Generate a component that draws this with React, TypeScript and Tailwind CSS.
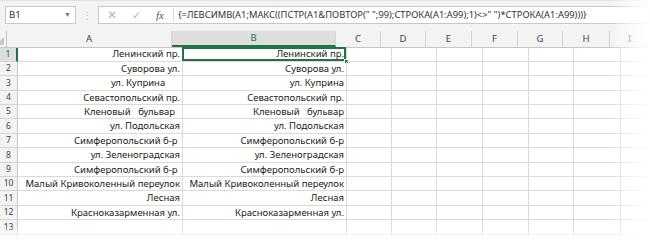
import React from 'react';

const colW = ['w-[165px]', 'w-[164px]', 'w-[45px]', 'w-[45px]', 'w-[46px]', 'w-[46px]', 'w-[45px]', 'w-[47px]', 'w-[40px]'];
const colNames = ['A', 'B', 'C', 'D', 'E', 'F', 'G', 'H', 'I'];

const streets: string[] = [
  'Ленинский пр.',
  'Суворова ул.',
  'ул. Куприна      ',
  'Севастопольский пр.',
  'Кленовый   бульвар  ',
  'ул. Подольская',
  'Симферопольский б-р ',
  'ул. Зеленоградская',
  'Симферопольский б-р ',
  'Малый Кривоколенный переулок',
  'Лесная',
  'Красноказарменная ул.',
  '',
  '',
];

const formula = '{=ЛЕВСИМВ(A1;МАКС((ПСТР(A1&ПОВТОР(" ";99);СТРОКА(A1:A99);1)<>" ")*СТРОКА(A1:A99)))}';

export default function App() {
  return (
    <div className="relative w-[650px] h-[240px] overflow-hidden bg-white font-['Noto_Sans',sans-serif] text-[#1a1a1a]">
      {/* Formula bar */}
      <div className="h-[31px] bg-[#f3f3f3] border-t border-[#e2e2e2] flex items-center pl-[5px] pb-[2px]">
        <div className="w-[71px] h-[18px] bg-white border border-[#c8c8c8] flex items-center justify-between pl-[3px] pr-[4px]">
          <span className="text-[9.5px] text-[#333]">B1</span>
          <span className="text-[7px] text-[#777]">▼</span>
        </div>
        <div className="w-[22px] flex justify-center text-[#bbb] text-[10px]">⋮</div>
        <div className="flex-1 h-[18px] bg-white border border-[#c8c8c8] flex items-center">
          <div className="w-[26px] text-center text-[#b4b4b4] text-[12px]">✕</div>
          <div className="w-[22px] text-center text-[#b4b4b4] text-[11px]">✓</div>
          <div className="w-[26px] text-center text-[#555] text-[11px] italic font-['Liberation_Serif',serif]">fx</div>
          <div className="w-px h-[14px] bg-[#dcdcdc] mr-[4px]" />
          <span className="whitespace-pre text-[9.35px] text-[#333]">{formula}</span>
        </div>
      </div>

      {/* Column headers */}
      <div className="flex h-[16.5px] bg-[#f3f3f3] border-b border-[#c6c6c6]">
        <div className="w-[18px] border-r border-[#c6c6c6] relative">
          <div className="absolute right-[2px] bottom-[2px] w-0 h-0 border-l-[8px] border-l-transparent border-b-[8px] border-b-[#c8c8c8]" />
        </div>
        {colNames.map((c, i) => (
          <div
            key={c}
            className={`${colW[i]} shrink-0 border-r border-[#d4d4d4] flex items-center justify-center text-[9.5px] ${
              i === 1 ? 'bg-[#dedede] text-[#217346] border-b-2 border-b-[#217346]' : 'text-[#444]'
            }`}
          >
            {c}
          </div>
        ))}
      </div>

      {/* Rows */}
      {streets.map((s, r) => (
        <div key={r} className="flex h-[14.4px]">
          <div
            className={`w-[18px] shrink-0 flex items-center justify-center text-[8.5px] border-b border-[#d4d4d4] ${
              r === 0 ? 'bg-[#dedede] text-[#217346] border-r-2 border-r-[#217346]' : 'bg-[#f3f3f3] text-[#444] border-r border-r-[#c6c6c6]'
            }`}
          >
            {r < 13 ? r + 1 : ''}
          </div>
          {colNames.map((c, i) => (
            <div
              key={c}
              className={`${colW[i]} shrink-0 relative border-r border-b border-[#dadada] flex items-center justify-end pr-[2px] text-[9.5px] leading-none whitespace-pre`}
            >
              {i === 0 && s}
              {i === 1 && s.trim()}
              {i === 1 && r === 0 && (
                <>
                  <div className="absolute -left-[1px] -top-[1px] right-0 bottom-0 border-2 border-[#217346]" />
                  <div className="absolute -right-[3px] -bottom-[3px] w-[5px] h-[5px] bg-[#217346] border border-white" />
                </>
              )}
            </div>
          ))}
        </div>
      ))}

      {/* edge fades of the screenshot */}
      <div className="absolute top-0 right-0 h-full w-[40px] bg-linear-to-l from-white via-white/60 to-transparent" />
      <div className="absolute left-0 bottom-0 w-full h-[14px] bg-linear-to-t from-white to-transparent" />
    </div>
  );
}
